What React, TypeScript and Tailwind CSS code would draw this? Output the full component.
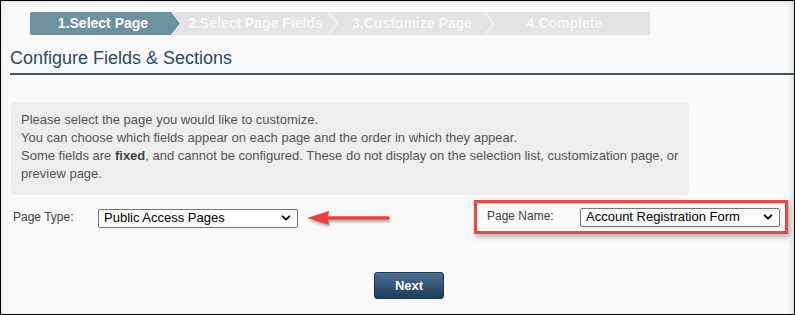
import React from "react";

const steps = [
  { label: "1.Select Page", w: "w-[150px]", active: true, first: true },
  { label: "2.Select Page Fields", w: "w-[165px]" },
  { label: "3.Customize Page", w: "w-[164px]" },
  { label: "4.Complete", w: "w-[165px]", last: true },
];

function Chevron() {
  return (
    <svg width="10" height="10" viewBox="0 0 12 12" aria-hidden="true">
      <path d="M2 4l4 4 4-4" fill="none" stroke="#111" strokeWidth="2.4" strokeLinecap="round" strokeLinejoin="round" />
    </svg>
  );
}

function Select({ value, w }: { value: string; w: string }) {
  return (
    <div className={`${w} h-[19px] border border-[#767676] bg-white rounded-[2px] flex items-center justify-between pl-[5px] pr-[6px] text-[13px] text-black`}>
      <span>{value}</span>
      <Chevron />
    </div>
  );
}

export default function App() {
  return (
    <div
      className="w-[795px] h-[315px] border border-black bg-[#fafafa] shadow-[inset_-5px_0_5px_-3px_rgba(0,0,0,0.12),inset_0_6px_6px_-4px_rgba(0,0,0,0.08),inset_4px_0_4px_-3px_rgba(0,0,0,0.08)] overflow-hidden text-[#555]"
      style={{ fontFamily: '"Liberation Sans", Arial, sans-serif' }}
    >
      {/* wizard steps */}
      <div className="flex pl-[29px] pt-[11px]">
        {steps.map((s, i) => (
          <div
            key={s.label}
            className={`${s.w} h-[23px] flex items-center justify-center text-[14px] font-bold ${i > 0 ? "-ml-[8px]" : ""} ${s.active ? "bg-[#6c919f] text-white" : "bg-[#e3e3e3] text-[#f7f7f7]"} ${
              s.first
                ? "[clip-path:polygon(0_0,calc(100%-9px)_0,100%_50%,calc(100%-9px)_100%,0_100%)] rounded-l-[2px]"
                : s.last
                ? "[clip-path:polygon(0_0,100%_0,100%_100%,0_100%,9px_50%)]"
                : "[clip-path:polygon(0_0,calc(100%-9px)_0,100%_50%,calc(100%-9px)_100%,0_100%,9px_50%)]"
            }`}
          >
            <span className={s.first ? "pr-[4px]" : s.last ? "-ml-[6px]" : "pl-[2px]"}>{s.label}</span>
          </div>
        ))}
      </div>

      {/* title */}
      <div className="ml-[9px] mt-[12px] border-b-2 border-[#3d5b69] pb-[4px]">
        <h1 className="text-[18px] leading-[22px] text-[#2e4a58]">Configure Fields &amp; Sections</h1>
      </div>

      {/* info */}
      <div className="ml-[10px] mt-[27px] w-[678px] h-[93px] bg-[#eeeeee] rounded-[4px] px-[10px] pt-[9px] text-[13px] leading-[18px] text-[#555]">
        <p>Please select the page you would like to customize.</p>
        <p>You can choose which fields appear on each page and the order in which they appear.</p>
        <p>
          Some fields are <b className="font-bold text-[#444]">fixed</b>, and cannot be configured. These do not display on the selection list, customization page, or
          preview page.
        </p>
      </div>

      {/* selects row */}
      <div className="flex items-start mt-[5px]">
        <div className="flex items-center pl-[12px] pt-[8px]">
          <span className="w-[85px] text-[12px] text-[#444] -mt-[3px]">Page Type:</span>
          <Select value="Public Access Pages" w="w-[200px]" />
          <svg width="90" height="20" viewBox="0 0 90 20" className="ml-[6px] overflow-visible" aria-hidden="true">
            <defs>
              <filter id="sh" x="-20%" y="-50%" width="140%" height="200%">
                <feDropShadow dx="1" dy="2" stdDeviation="1.5" floodColor="#000" floodOpacity="0.35" />
              </filter>
            </defs>
            <g filter="url(#sh)">
              <path d="M24 8.2h60a1.8 1.8 0 0 1 0 3.6H24l1 5.2L3 10l22-7z" fill="#ef3d42" />
            </g>
          </svg>
        </div>

        <div className="ml-auto mr-[6px] w-[314px] h-[34px] border-[3px] border-[#ee4547] shadow-[2px_3px_5px_rgba(0,0,0,0.3)] flex items-center pl-[10px]">
          <span className="w-[93px] text-[12px] text-[#444] -mt-[3px]">Page Name:</span>
          <Select value="Account Registration Form" w="w-[200px]" />
        </div>
      </div>

      {/* next */}
      <div className="flex justify-center mt-[38px] pl-[23px]">
        <button className="w-[70px] h-[27px] rounded-[3px] border border-[#1a3550] bg-gradient-to-b from-[#4d6f8e] to-[#1d3d5d] text-white text-[13px] font-bold">
          Next
        </button>
      </div>
    </div>
  );
}
